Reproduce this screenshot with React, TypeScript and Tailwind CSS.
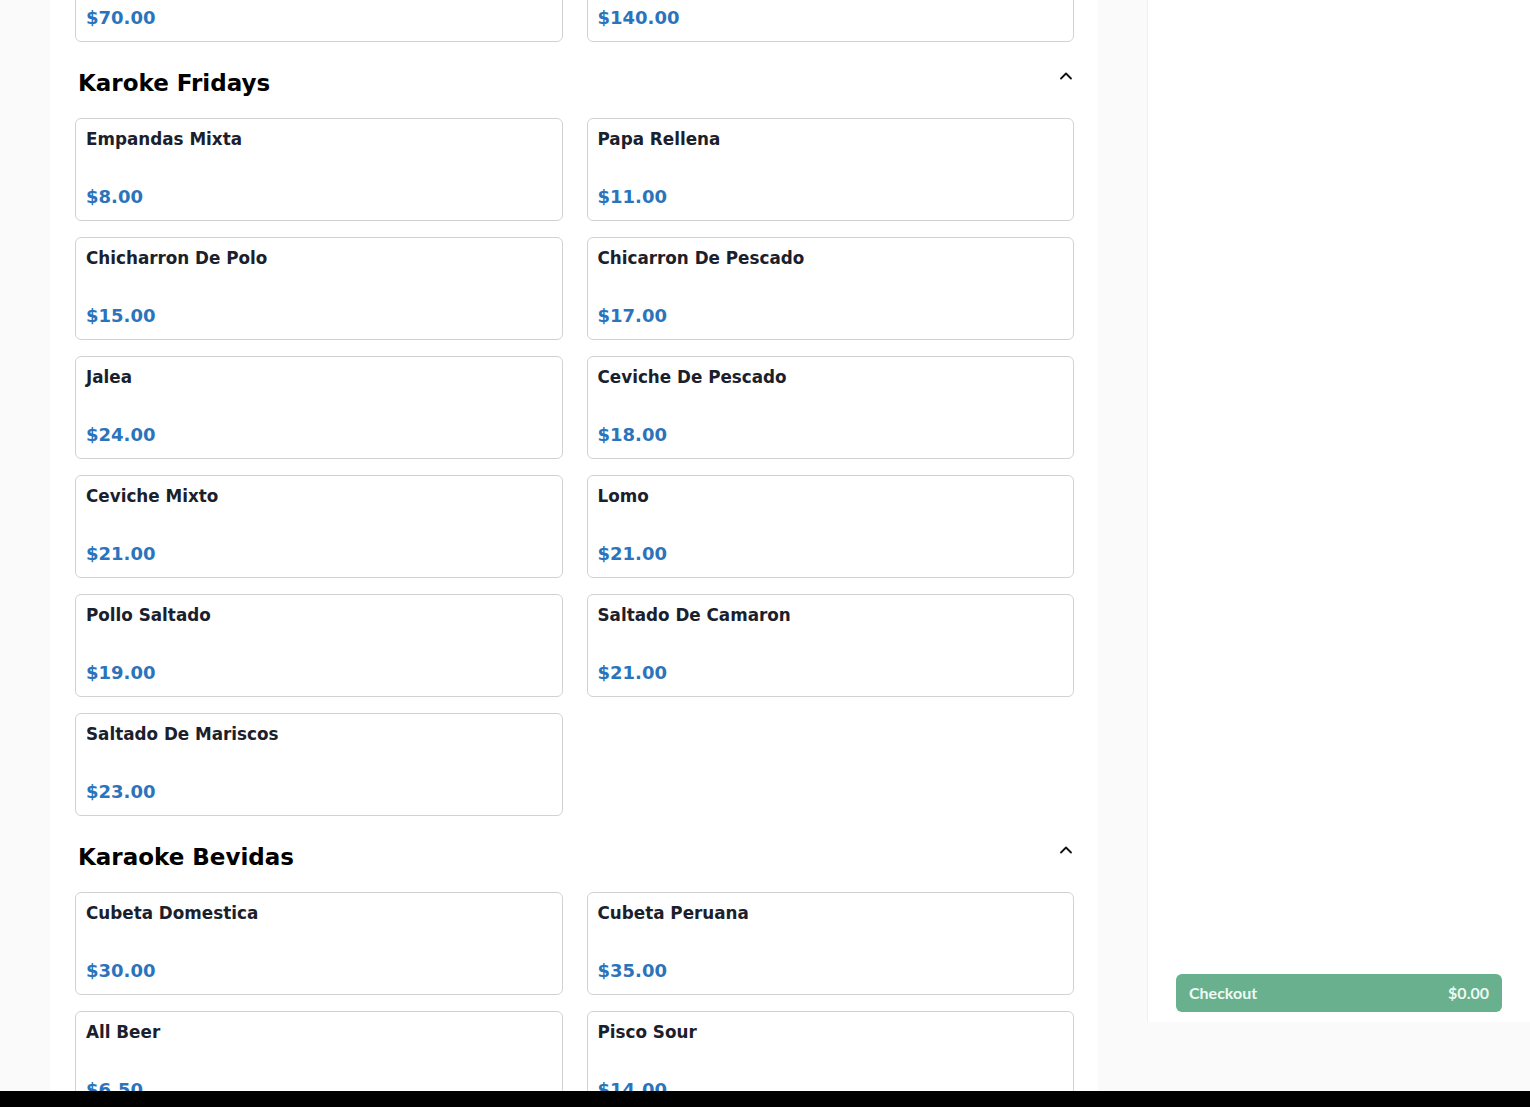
import React from "react";

type Item = { name: string; price: string };

const sections: { title: string; items: Item[]; scrolled?: boolean }[] = [
  {
    title: "Karaoke Combos",
    scrolled: true,
    items: [
      { name: "Combo Familiar", price: "$70.00" },
      { name: "Combo Fiesta", price: "$140.00" },
    ],
  },
  {
    title: "Karoke Fridays",
    items: [
      { name: "Empandas Mixta", price: "$8.00" },
      { name: "Papa Rellena", price: "$11.00" },
      { name: "Chicharron De Polo", price: "$15.00" },
      { name: "Chicarron De Pescado", price: "$17.00" },
      { name: "Jalea", price: "$24.00" },
      { name: "Ceviche De Pescado", price: "$18.00" },
      { name: "Ceviche Mixto", price: "$21.00" },
      { name: "Lomo", price: "$21.00" },
      { name: "Pollo Saltado", price: "$19.00" },
      { name: "Saltado De Camaron", price: "$21.00" },
      { name: "Saltado De Mariscos", price: "$23.00" },
    ],
  },
  {
    title: "Karaoke Bevidas",
    items: [
      { name: "Cubeta Domestica", price: "$30.00" },
      { name: "Cubeta Peruana", price: "$35.00" },
      { name: "All Beer", price: "$6.50" },
      { name: "Pisco Sour", price: "$14.00" },
    ],
  },
];

const ChevronUp = () => (
  <svg width="16" height="16" viewBox="0 0 16 16" fill="none" className="mt-[1px] shrink-0">
    <path d="M3 10.5 L8 5.5 L13 10.5" stroke="#111" strokeWidth="1.8" strokeLinecap="round" strokeLinejoin="round" />
  </svg>
);

const ItemCard = ({ item }: { item: Item }) => (
  <div className="h-[103px] border border-[#d2d2d2] rounded-md bg-white px-[10px] pt-[10px] pb-[10px] flex flex-col justify-between">
    <p className="text-[16.8px] leading-[20px] font-bold text-[#1a202c]">{item.name}</p>
    <p className="text-[18px] leading-[26px] font-bold text-[#2b74bc]">{item.price}</p>
  </div>
);

export default function App() {
  return (
    <div
      className="h-[1107px] w-full overflow-hidden flex flex-col bg-[#fafafa]"
      style={{ fontFamily: '"DejaVu Sans", Verdana, sans-serif' }}
    >
      <div className="flex-1 min-h-0 flex flex-row">
        <div className="ml-[50px] w-[1048px] bg-white pl-[25px] pr-[24px] overflow-hidden">
          <div className="-mt-[61px]">
            {sections.map((s, i) => (
              <div key={s.title}>
                {!s.scrolled && (
                  <div className={`${i === 0 ? "" : "mt-[25px]"} mb-[19px] h-8 pl-[3px] flex flex-row items-start justify-between`}>
                    <h2 className="text-[23px] leading-8 font-bold text-black">{s.title}</h2>
                    <ChevronUp />
                  </div>
                )}
                <div className="grid grid-cols-2 gap-x-6 gap-y-4">
                  {s.items.map((it) => (
                    <ItemCard key={it.name} item={it} />
                  ))}
                </div>
              </div>
            ))}
          </div>
        </div>

        <div className="ml-[49px] w-[383px] h-[1022px] bg-white border-l border-[#efefef] flex flex-col justify-end">
          <button
            className="mx-[28px] mb-[10px] h-[38px] rounded-md bg-[#68b08e] px-[13px] flex flex-row items-center justify-between text-[#eefaf3] text-[16px] font-bold"
            style={{ fontFamily: '"Lato", "Open Sans", sans-serif' }}
          >
            <span>Checkout</span>
            <span>$0.00</span>
          </button>
        </div>
      </div>
      <div className="h-4 bg-black shrink-0" />
    </div>
  );
}
